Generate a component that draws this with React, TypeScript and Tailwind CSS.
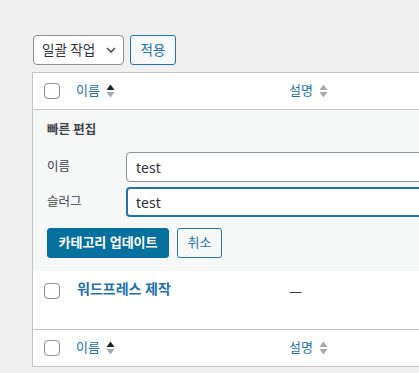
import React from 'react'

const font = 'font-["Noto_Sans","Noto_Sans_CJK_KR",sans-serif]'

function Checkbox() {
  return <span className="block h-4 w-4 shrink-0 rounded-[4px] border border-[#8c8f94] bg-white" />
}

function SortArrows({ active }: { active?: boolean }) {
  return (
    <svg width="9" height="14" viewBox="0 0 9 14" className="ml-[6px] shrink-0">
      <path d="M4.5 0.5 L8.5 6 H0.5 Z" fill={active ? '#1d2327' : '#a7aaad'} />
      <path d="M0.5 8 H8.5 L4.5 13.5 Z" fill="#a7aaad" />
    </svg>
  )
}

function HeaderRow({ top }: { top?: boolean }) {
  return (
    <div
      className={`flex h-[37px] items-center ${top ? 'border-b' : 'border-t'} border-[#c3c4c7] bg-white`}
    >
      <div className="w-[27px] pl-[11px]">
        <Checkbox />
      </div>
      <div className="flex w-[229px] items-center pl-[16px] text-[13px] text-[#2271b1]">
        이름
        <SortArrows active />
      </div>
      <div className="flex items-center text-[13px] text-[#2271b1]">
        설명
        <SortArrows />
      </div>
    </div>
  )
}

function QuickEdit() {
  return (
    <div className="bg-[#f6f7f7] pb-[13px] pl-[14px] pt-[11px]">
      <div className="text-[12.5px] font-bold leading-[18px] text-[#3c434a]">빠른 편집</div>
      <div className="mt-[13px] flex flex-col gap-[5px]">
        <div className="flex items-center">
          <span className="w-[79px] text-[12.5px] text-[#3c434a]">이름</span>
          <div className="flex h-[30px] w-[320px] items-center rounded-[4px] border border-[#8c8f94] bg-white pl-[9px] text-[14px] text-[#2c3338]">
            test
          </div>
        </div>
        <div className="flex items-center">
          <span className="w-[79px] text-[12.5px] text-[#3c434a]">슬러그</span>
          <div className="flex h-[30px] w-[320px] items-center rounded-[4px] border-2 border-[#2271b1] bg-white pl-[8px] text-[14px] text-[#2c3338]">
            test
          </div>
        </div>
      </div>
      <div className="mt-[11px] flex items-center gap-[8px]">
        <button
          type="button"
          className="h-[30px] w-[122px] rounded-[3px] border border-[#06709f] bg-[#06709f] text-[13px] font-bold text-white"
        >
          카테고리 업데이트
        </button>
        <button
          type="button"
          className="h-[30px] w-[45px] rounded-[3px] border border-[#2271b1] bg-[#f6f7f7] text-[13px] text-[#2271b1]"
        >
          취소
        </button>
      </div>
    </div>
  )
}

export default function App() {
  return (
    <div className={`h-[373px] w-[419px] overflow-hidden bg-[#f0f0f1] ${font}`}>
      <div className="flex gap-[6px] pl-[33px] pt-[35px]">
        <div className="flex h-[30px] w-[91px] items-center justify-between rounded-[4px] border border-[#8c8f94] bg-white pl-[8px] pr-[6px] text-[13.5px] text-[#2c3338]">
          일괄 작업
          <svg width="12" height="12" viewBox="0 0 12 12">
            <path d="M2 4 L6 8 L10 4" fill="none" stroke="#50575e" strokeWidth="1.6" />
          </svg>
        </div>
        <button
          type="button"
          className="h-[30px] w-[46px] rounded-[3px] border border-[#2271b1] bg-[#f6f7f7] text-[13.5px] text-[#2271b1]"
        >
          적용
        </button>
      </div>
      <div className="ml-[32px] mt-[7px] w-[500px] border border-[#c3c4c7] bg-white">
        <HeaderRow top />
        <QuickEdit />
        <div className="flex h-[58px] items-start pt-[12px]">
          <div className="w-[27px] pl-[11px]">
            <Checkbox />
          </div>
          <div className="-mt-[2px] w-[229px] pl-[17px] text-[14px] font-bold leading-[16px] text-[#2271b1]">
            워드프레스 제작
          </div>
          <div className="text-[13px] leading-[16px] text-[#3c434a]">—</div>
        </div>
        <HeaderRow />
      </div>
    </div>
  )
}
